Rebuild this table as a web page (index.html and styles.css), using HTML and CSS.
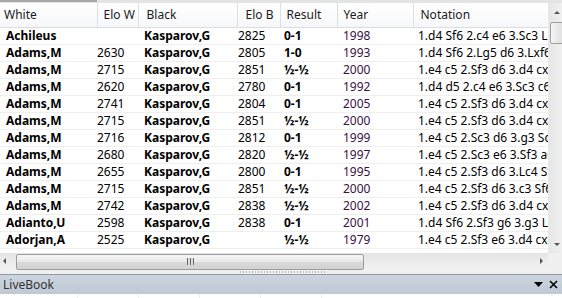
FILE: index.html
```html
<!DOCTYPE html>
<html>
<head>
<meta charset="utf-8">
<link rel="stylesheet" href="styles.css">
</head>
<body>
<div class="app">
  <div class="topstrip"><div class="tab"></div></div>
  <div class="grid-area">
    <div class="table-wrap">
      <div class="main">
        <table class="games">
          <colgroup>
            <col class="c-white"><col class="c-elow"><col class="c-black"><col class="c-elob"><col class="c-result"><col class="c-year"><col class="c-notation">
          </colgroup>
          <thead>
            <tr>
              <th class="h-white">White</th><th class="h-elow">Elo W</th><th class="h-black">Black</th><th class="h-elob">Elo B</th><th class="h-result">Result</th><th class="h-year">Year</th><th class="h-notation">Notation</th>
            </tr>
          </thead>
          <tbody>
            <tr><td class="white">Achileus</td><td class="elow"></td><td class="black">Kasparov,G</td><td class="elob">2825</td><td class="result">0-1</td><td class="year">1998</td><td class="notation">1.d4 Sf6 2.c4 e6 3.Sc3 Lb4</td></tr>
            <tr><td class="white">Adams,M</td><td class="elow">2630</td><td class="black">Kasparov,G</td><td class="elob">2805</td><td class="result">1-0</td><td class="year">1993</td><td class="notation">1.d4 Sf6 2.Lg5 d6 3.Lxf6 exf6</td></tr>
            <tr><td class="white">Adams,M</td><td class="elow">2715</td><td class="black">Kasparov,G</td><td class="elob">2851</td><td class="result">½-½</td><td class="year">2000</td><td class="notation">1.e4 c5 2.Sf3 d6 3.d4 cxd4</td></tr>
            <tr><td class="white">Adams,M</td><td class="elow">2620</td><td class="black">Kasparov,G</td><td class="elob">2780</td><td class="result">0-1</td><td class="year">1992</td><td class="notation">1.d4 d5 2.c4 e6 3.Sc3 c6</td></tr>
            <tr><td class="white">Adams,M</td><td class="elow">2741</td><td class="black">Kasparov,G</td><td class="elob">2804</td><td class="result">0-1</td><td class="year">2005</td><td class="notation">1.e4 c5 2.Sf3 d6 3.d4 cxd4</td></tr>
            <tr><td class="white">Adams,M</td><td class="elow">2715</td><td class="black">Kasparov,G</td><td class="elob">2851</td><td class="result">½-½</td><td class="year">2000</td><td class="notation">1.e4 c5 2.Sf3 d6 3.d4 cxd4</td></tr>
            <tr><td class="white">Adams,M</td><td class="elow">2716</td><td class="black">Kasparov,G</td><td class="elob">2812</td><td class="result">0-1</td><td class="year">1999</td><td class="notation">1.e4 c5 2.Sc3 d6 3.g3 Sc6</td></tr>
            <tr><td class="white">Adams,M</td><td class="elow">2680</td><td class="black">Kasparov,G</td><td class="elob">2820</td><td class="result">½-½</td><td class="year">1997</td><td class="notation">1.e4 c5 2.Sc3 e6 3.Sf3 a6</td></tr>
            <tr><td class="white">Adams,M</td><td class="elow">2655</td><td class="black">Kasparov,G</td><td class="elob">2800</td><td class="result">0-1</td><td class="year">1995</td><td class="notation">1.e4 c5 2.Sf3 d6 3.Lc4 Sf6</td></tr>
            <tr><td class="white">Adams,M</td><td class="elow">2715</td><td class="black">Kasparov,G</td><td class="elob">2851</td><td class="result">½-½</td><td class="year">2000</td><td class="notation">1.e4 c5 2.Sf3 d6 3.c3 Sf6</td></tr>
            <tr><td class="white">Adams,M</td><td class="elow">2742</td><td class="black">Kasparov,G</td><td class="elob">2838</td><td class="result">½-½</td><td class="year">2002</td><td class="notation">1.e4 c5 2.Sf3 d6 3.d4 cxd4</td></tr>
            <tr><td class="white">Adianto,U</td><td class="elow">2598</td><td class="black">Kasparov,G</td><td class="elob">2838</td><td class="result">0-1</td><td class="year">2001</td><td class="notation">1.d4 Sf6 2.Sf3 g6 3.g3 Lg7</td></tr>
            <tr><td class="white">Adorjan,A</td><td class="elow">2525</td><td class="black">Kasparov,G</td><td class="elob"></td><td class="result">½-½</td><td class="year">1979</td><td class="notation">1.e4 c5 2.Sf3 e6 3.d4 cxd4</td></tr>
          </tbody>
        </table>
      </div>
      <div class="vscroll">
        <div class="arrow-up"></div>
        <div class="vthumb"></div>
        <div class="vtrack"></div>
        <div class="arrow-down"></div>
      </div>
    </div>
    <div class="hscroll-row">
      <div class="hscroll">
        <div class="arrow-left"></div>
        <div class="hthumb"><span class="grip-lines"></span></div>
        <div class="htrack"></div>
        <div class="arrow-right"></div>
      </div>
      <div class="corner"></div>
    </div>
  </div>
  <div class="splitter"><div class="grip"></div></div>
  <div class="livebook">
    <span class="lb-title">LiveBook</span>
    <div class="lb-icons">
      <svg class="lb-drop" width="9" height="6" viewBox="0 0 9 6"><path d="M0 0H9L4.5 5Z" fill="#000"/></svg>
      <svg class="lb-close" width="9" height="9" viewBox="0 0 9 9"><path d="M1 1L8 8M8 1L1 8" stroke="#000" stroke-width="1.6"/></svg>
    </div>
  </div>
  <div class="below">
    <div class="bcol b1"></div><div class="bcol b2"></div><div class="bcol b3"></div><div class="bcol b4"></div><div class="bcol b5"></div>
  </div>
</div>
</body>
</html>
```

FILE: styles.css
```css
html, body {
  margin: 0;
  padding: 0;
  background: #fff;
  overflow: hidden;
}
.app {
  width: 562px;
  height: 298px;
  display: flex;
  flex-direction: column;
  font-family: "Noto Sans", "Open Sans", sans-serif;
  font-size: 12px;
  line-height: 16px;
  color: #000;
  overflow: hidden;
}
.topstrip {
  height: 3px;
  background: #e4e4e4;
  display: flex;
  flex: none;
}
.tab {
  width: 97px;
  height: 2px;
  background: #a8a8a8;
}
.grid-area {
  display: flex;
  flex-direction: column;
  height: 267px;
  flex: none;
}
.table-wrap {
  display: flex;
  height: 250px;
  flex: none;
}
.main {
  width: 548px;
  overflow: hidden;
  flex: none;
}
.games {
  border-collapse: collapse;
  table-layout: fixed;
  width: 620px;
}
.c-white { width: 97px; }
.c-elow { width: 41px; }
.c-black { width: 99px; }
.c-elob { width: 43px; }
.c-result { width: 57px; }
.c-year { width: 76px; }
.c-notation { width: 207px; }

.games th {
  height: 24px;
  padding: 0;
  text-align: left;
  font-weight: normal;
  color: #1a1a1a;
  background: linear-gradient(#ffffff, #f6f7f9);
  border-right: 1px solid #dedfe2;
  border-bottom: 1px solid #dcdde0;
  white-space: nowrap;
  overflow: hidden;
}
.games th.h-white { padding-left: 4px; }
.games th.h-elow { padding-left: 6px; }
.games th.h-black { padding-left: 8px; }
.games th.h-elob { padding-left: 8px; }
.games th.h-result { padding-left: 6px; }
.games th.h-year { padding-left: 6px; }
.games th.h-notation { padding-left: 7px; }

.games td {
  height: 16px;
  padding: 0;
  border-bottom: 1px solid #efefef;
  white-space: nowrap;
  overflow: hidden;
}
.games td.white { padding-left: 6px; font-weight: bold; }
.games td.elow { padding-left: 0; }
.games td.black { padding-left: 6px; font-weight: bold; }
.games td.elob { padding-left: 1px; }
.games td.result { padding-left: 4px; font-weight: bold; }
.games td.year { padding-left: 6px; color: #3a1044; }
.games td.notation { padding-left: 5px; }

.vscroll {
  width: 17px;
  flex: none;
  display: flex;
  flex-direction: column;
  background: linear-gradient(90deg, #e6e6e6, #f3f3f3);
  border-left: 1px solid #e8e8e8;
}
.arrow-up, .arrow-down {
  height: 17px;
  position: relative;
}
.arrow-up::after {
  content: "";
  position: absolute;
  left: 5px;
  top: 8px;
  border-left: 3px solid transparent;
  border-right: 3px solid transparent;
  border-bottom: 3px solid #555;
}
.arrow-down::after {
  content: "";
  position: absolute;
  left: 5px;
  top: 7px;
  border-left: 3px solid transparent;
  border-right: 3px solid transparent;
  border-top: 3px solid #555;
}
.vthumb {
  height: 20px;
  margin: 2px 2px 0 1px;
  border: 1px solid #a0a0a0;
  border-radius: 2px;
  background: linear-gradient(90deg, #f4f4f4, #e0e0e0);
}
.vtrack { flex: 1; }

.hscroll-row {
  display: flex;
  height: 17px;
  flex: none;
}
.hscroll {
  width: 548px;
  display: flex;
  align-items: center;
  background: linear-gradient(#e5e5e5, #f2f2f2);
  flex: none;
}
.corner { flex: 1; background: #f0f0f0; }
.arrow-left, .arrow-right {
  width: 17px;
  height: 17px;
  position: relative;
  flex: none;
}
.arrow-left::after {
  content: "";
  position: absolute;
  left: 3px;
  top: 5px;
  border-top: 3px solid transparent;
  border-bottom: 3px solid transparent;
  border-right: 3px solid #555;
}
.arrow-right::after {
  content: "";
  position: absolute;
  left: 9px;
  top: 5px;
  border-top: 3px solid transparent;
  border-bottom: 3px solid transparent;
  border-left: 3px solid #555;
}
.arrow-left { width: 16px; }
.hthumb {
  width: 346px;
  height: 14px;
  border: 1px solid #9c9c9c;
  border-radius: 2px;
  background: linear-gradient(#f6f6f6, #e8e8e8 50%, #d9d9d9 51%, #d2d2d2);
  display: flex;
  align-items: center;
  justify-content: center;
  flex: none;
}
.grip-lines {
  width: 7px;
  height: 7px;
  background: repeating-linear-gradient(90deg, #6a6a6a 0 1px, #dcdcdc 1px 3px);
}
.htrack { flex: 1; }

.splitter {
  height: 4px;
  background: #f0f0f0;
  position: relative;
  flex: none;
}
.grip {
  position: absolute;
  left: 240px;
  top: 1px;
  width: 86px;
  height: 2px;
  background: repeating-linear-gradient(90deg, #b8b8b8 0 1px, transparent 1px 3px);
}
.livebook {
  height: 19px;
  flex: none;
  border-top: 1px solid #8e9aa6;
  background: linear-gradient(#ccd5de, #bfc9d3);
  display: flex;
  align-items: center;
  justify-content: space-between;
  padding: 0 4px 0 3px;
}
.lb-title {
  color: #333;
  font-size: 12px;
}
.lb-icons {
  display: flex;
  align-items: center;
  gap: 6px;
}
.below {
  flex: 1;
  display: flex;
  background: #fff;
}
.bcol {
  border-right: 1px solid #ececec;
}
.b1 { width: 77px; }
.b2 { width: 60px; }
.b3 { width: 60px; }
.b4 { width: 60px; }
.b5 { width: 60px; }
```
